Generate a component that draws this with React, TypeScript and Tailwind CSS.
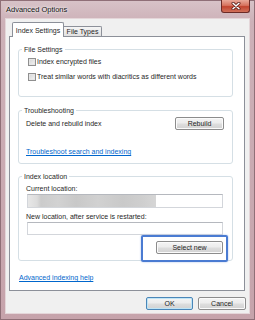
import React from 'react'

function Button({ label, primary, className = '' }: { label: string; primary?: boolean; className?: string }) {
  return (
    <div
      className={`flex items-center justify-center h-[13px] rounded-[2px] border bg-[linear-gradient(#f4f4f4,#ececec_48%,#dedede_52%,#d2d2d2)] text-[#1e1e1e] ${
        primary ? 'border-[#4a86b8] shadow-[inset_0_0_0_1px_#bfe4f6]' : 'border-[#8c8c8c] shadow-[inset_0_0_0_1px_#fbfbfb]'
      } ${className}`}
    >
      {label}
    </div>
  )
}

function Check({ label }: { label: string }) {
  return (
    <div className="flex items-center h-[9px] gap-[1px]">
      <span className="w-[8px] h-[8px] shrink-0 border border-[#8f8f8f] bg-[linear-gradient(135deg,#d4d4d4,#f5f5f5)] shadow-[inset_0_0_0_1px_#e6e6e6]" />
      <span>{label}</span>
    </div>
  )
}

function Group({ title, className = '', children }: { title: string; className?: string; children: React.ReactNode }) {
  return (
    <fieldset className={`border border-[#d5dfe5] rounded-[3px] ${className}`}>
      <legend className="ml-[3px] px-[2px] leading-[9px]">{title}</legend>
      {children}
    </fieldset>
  )
}

export default function App() {
  return (
    <div className="w-[255px] h-[320px] flex flex-col bg-[linear-gradient(180deg,#d8c3c8_0px,#cdb1b8_22px,#c6a3ab_100%)] shadow-[inset_0_0_0_1px_#8f6f77] font-['Liberation_Sans',Arial,sans-serif] text-[7px] leading-[9px] text-[#1f1f1f]">
      {/* title bar */}
      <div className="h-[19px] flex justify-between">
        <span className="pl-[6px] pt-[5px] text-[7.5px] text-[#111] [text-shadow:0_0_4px_#fff,0_0_2px_#fff]">Advanced Options</span>
        <div className="mr-[5px] w-[29px] h-[13px] rounded-b-[3px] border border-t-0 border-[#6b2a26] bg-[linear-gradient(180deg,#e9a899_0%,#d7735f_45%,#c2442f_55%,#d0705a_100%)] flex items-center justify-center">
          <svg width="10" height="8" viewBox="0 0 10 8">
            <path d="M2 1.2 L8 6.8 M8 1.2 L2 6.8" stroke="#5a1c16" strokeWidth="3" strokeLinecap="round" />
            <path d="M2 1.2 L8 6.8 M8 1.2 L2 6.8" stroke="#ffffff" strokeWidth="1.5" strokeLinecap="round" />
          </svg>
        </div>
      </div>

      {/* client area */}
      <div className="flex-1 mx-[6px] mb-[7px] bg-[#f0f0f0] shadow-[0_0_0_1px_#e4d6d9] pt-[3px] pl-[3px] pr-[4px] flex flex-col">
        {/* tabs */}
        <div className="h-[14px] flex items-end pl-[3px] relative z-10">
          <div className="w-[52px] h-[15px] -mb-[1px] border border-b-0 border-[#8c9099] rounded-t-[2px] bg-white flex items-center justify-center">
            Index Settings
          </div>
          <div className="w-[38px] h-[10px] border border-b-0 border-l-0 border-[#8c9099] rounded-tr-[2px] bg-[linear-gradient(#f5f5f5,#e1e1e1)] flex items-center justify-center">
            File Types
          </div>
        </div>

        {/* tab page */}
        <div className="h-[255px] border border-[#8c9099] bg-white pl-[8px] pr-[11px] flex flex-col">
          <Group title="File Settings" className="mt-[8px]">
            <div className="pl-[9px] pt-[3px] pb-[15px] flex flex-col gap-[6px]">
              <Check label="Index encrypted files" />
              <Check label="Treat similar words with diacritics as different words" />
            </div>
          </Group>

          <Group title="Troubleshooting" className="mt-[9px]">
            <div className="pl-[7px] pr-[8px] pt-[2px] pb-[7px]">
              <div className="h-[13px] flex items-center justify-between">
                <span>Delete and rebuild index</span>
                <Button label="Rebuild" className="w-[49px]" />
              </div>
              <div className="mt-[17px] text-[#0066cc] underline">Troubleshoot search and indexing</div>
            </div>
          </Group>

          <Group title="Index location" className="mt-[8px]">
            <div className="pl-[7px] pr-[9px] pt-[3px] pb-[6px] flex flex-col">
              <span>Current location:</span>
              <div className="mt-[1px] ml-[1px] h-[14px] border border-[#d3d6db] border-t-[#b5b8be] bg-white">
                <div className="w-[128px] h-full bg-[linear-gradient(90deg,#e7e7e7_0px,#dcdcdc_9px,#cbcbcb_13px,#d2d2d2_30px,#c8c8c8_48px,#d1d1d1_70px,#c9c9c9_95px,#cfcfcf_115px,#d6d6d6_128px)]" />
              </div>
              <span className="mt-[4px]">New location, after service is restarted:</span>
              <div className="mt-[1px] ml-[1px] h-[13px] border border-[#d3d6db] border-t-[#b5b8be] bg-white" />
              <div className="mt-[6px] self-end relative">
                <Button label="Select new" className="w-[67px]" />
                <span className="absolute -left-[15px] -top-[6px] -right-[5px] -bottom-[8px] border-2 border-[#4a7bd2] rounded-[2px] shadow-[0_0_2px_#9bb6e6]" />
              </div>
            </div>
          </Group>

          <div className="mt-[12px] ml-[1px] text-[#0066cc] underline">Advanced indexing help</div>
        </div>

        {/* dialog buttons */}
        <div className="mt-[6px] -mr-[1px] flex justify-end gap-[5px]">
          <Button label="OK" primary className="w-[47px]" />
          <Button label="Cancel" className="w-[48px]" />
        </div>
      </div>
    </div>
  )
}
